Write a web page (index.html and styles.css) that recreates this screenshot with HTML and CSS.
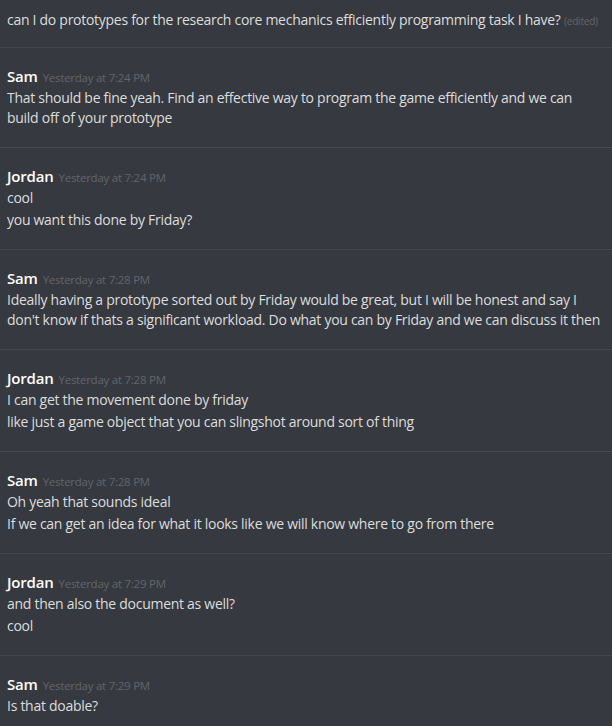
FILE: index.html
```html
<!DOCTYPE html>
<html>
<head>
<meta charset="utf-8">
<link rel="stylesheet" href="styles.css">
</head>
<body>
<div class="chat">
  <div class="group first">
    <div class="msg">can I do prototypes for the research core mechanics efficiently programming task I have? <span class="edited">(edited)</span></div>
  </div>
  <div class="group">
    <div class="head"><span class="name">Sam</span><span class="time">Yesterday at 7:24 PM</span></div>
    <div class="msg">That should be fine yeah. Find an effective way to program the game efficiently and we can build off of your prototype</div>
  </div>
  <div class="group">
    <div class="head"><span class="name">Jordan</span><span class="time">Yesterday at 7:24 PM</span></div>
    <div class="msg">cool</div>
    <div class="msg">you want this done by Friday?</div>
  </div>
  <div class="group">
    <div class="head"><span class="name">Sam</span><span class="time">Yesterday at 7:28 PM</span></div>
    <div class="msg">Ideally having a prototype sorted out by Friday would be great, but I will be honest and say I don't know if thats a significant workload. Do what you can by Friday and we can discuss it then</div>
  </div>
  <div class="group">
    <div class="head"><span class="name">Jordan</span><span class="time">Yesterday at 7:28 PM</span></div>
    <div class="msg">I can get the movement done by friday</div>
    <div class="msg">like just a game object that you can slingshot around sort of thing</div>
  </div>
  <div class="group">
    <div class="head"><span class="name">Sam</span><span class="time">Yesterday at 7:28 PM</span></div>
    <div class="msg">Oh yeah that sounds ideal</div>
    <div class="msg">If we can get an idea for what it looks like we will know where to go from there</div>
  </div>
  <div class="group">
    <div class="head"><span class="name">Jordan</span><span class="time">Yesterday at 7:29 PM</span></div>
    <div class="msg">and then also the document as well?</div>
    <div class="msg">cool</div>
  </div>
  <div class="group">
    <div class="head"><span class="name">Sam</span><span class="time">Yesterday at 7:29 PM</span></div>
    <div class="msg">Is that doable?</div>
  </div>
</div>
</body>
</html>
```
FILE: styles.css
```css
html, body {
  margin: 0;
  padding: 0;
  background: #36393f;
}
body {
  width: 612px;
  height: 726px;
  overflow: hidden;
  font-family: "Open Sans", "Noto Sans", sans-serif;
  color: #dcddde;
}
.chat {
  display: flex;
  flex-direction: column;
}
.group {
  border-top: 1px solid #42454b;
  padding: 17px 8px 18px 7px;
}
.group.first {
  border-top: none;
  padding-top: 9px;
  padding-bottom: 15px;
}
.head {
  display: flex;
  align-items: baseline;
  gap: 5px;
  height: 22px;
  line-height: 22px;
}
.name {
  color: #ffffff;
  font-weight: 600;
  font-size: 15px;
  letter-spacing: -0.2px;
}
.time {
  color: #62656b;
  font-size: 11.5px;
  letter-spacing: -0.25px;
}
.msg {
  font-size: 14px;
  line-height: 20px;
  padding: 1px 0;
  letter-spacing: -0.28px;
}
.edited {
  color: #62656b;
  font-size: 10px;
  letter-spacing: -0.2px;
}
```
